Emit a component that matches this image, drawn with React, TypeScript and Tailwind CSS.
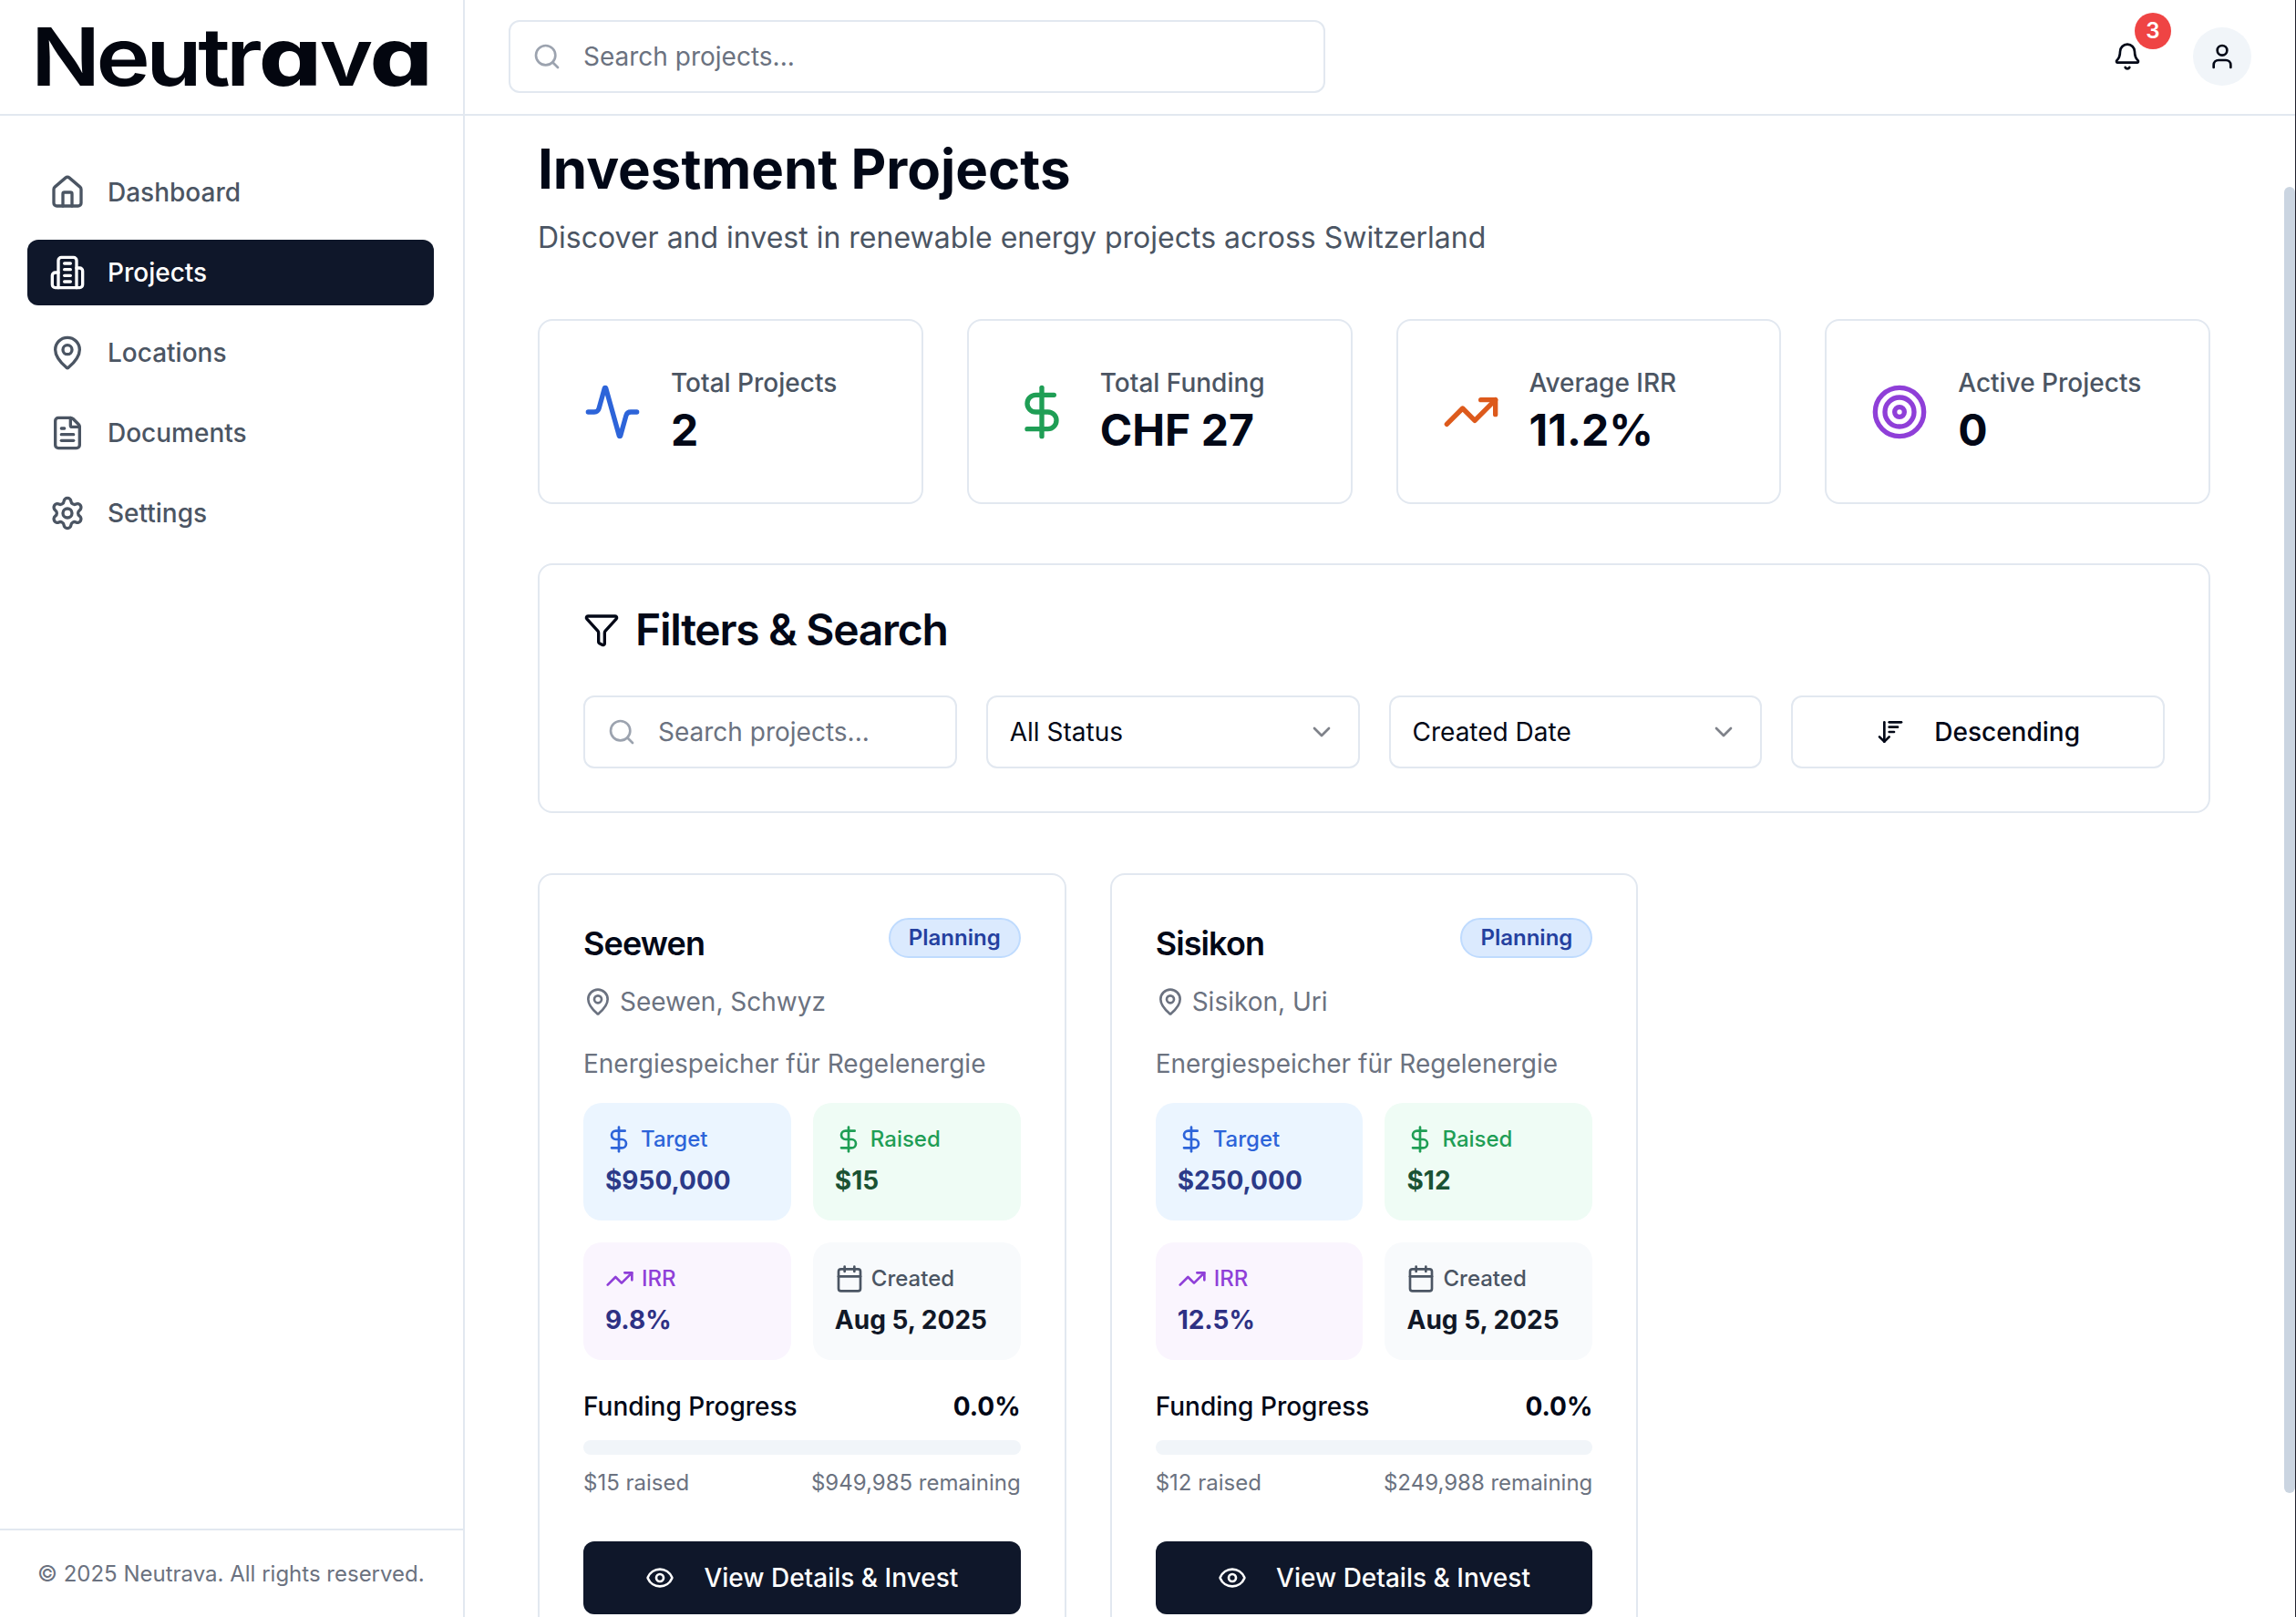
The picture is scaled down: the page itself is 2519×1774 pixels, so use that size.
import {
  Activity,
  ArrowDownWideNarrow,
  Bell,
  Calendar,
  ChevronDown,
  DollarSign,
  Eye,
  FileText,
  Filter,
  House,
  MapPin,
  Search,
  Settings,
  Target,
  TrendingUp,
  User,
} from "lucide-react";
import type { ReactNode } from "react";

function ProjectsIcon({ size }: { size: number }) {
  return (
    <svg
      width={size}
      height={size}
      viewBox="0 0 24 24"
      fill="none"
      stroke="currentColor"
      strokeWidth="2"
      strokeLinecap="round"
      strokeLinejoin="round"
    >
      <path d="M6 22V4a2 2 0 0 1 2-2h8a2 2 0 0 1 2 2v18Z" />
      <path d="M6 12H4a2 2 0 0 0-2 2v6a2 2 0 0 0 2 2h2" />
      <path d="M18 9h2a2 2 0 0 1 2 2v9a2 2 0 0 1-2 2h-2" />
      <path d="M10 6h4" />
      <path d="M10 10h4" />
      <path d="M10 14h4" />
      <path d="M10 18h4" />
    </svg>
  );
}

const nav = [
  { label: "Dashboard", icon: House },
  { label: "Projects", icon: ProjectsIcon, active: true },
  { label: "Locations", icon: MapPin },
  { label: "Documents", icon: FileText },
  { label: "Settings", icon: Settings },
];

const stats = [
  { label: "Total Projects", value: "2", icon: Activity, color: "text-[#2d64d9]" },
  { label: "Total Funding", value: "CHF 27", icon: DollarSign, color: "text-[#1f9e55]" },
  { label: "Average IRR", value: "11.2%", icon: TrendingUp, color: "text-[#dd5a1c]" },
  { label: "Active Projects", value: "0", icon: Target, color: "text-[#8f3fd8]" },
];

const projects = [
  {
    name: "Seewen",
    place: "Seewen, Schwyz",
    target: "$950,000",
    raised: "$15",
    irr: "9.8%",
    remaining: "$949,985 remaining",
  },
  {
    name: "Sisikon",
    place: "Sisikon, Uri",
    target: "$250,000",
    raised: "$12",
    irr: "12.5%",
    remaining: "$249,988 remaining",
  },
];

function Tile({
  icon,
  label,
  value,
  bg,
  labelColor,
  valueColor,
}: {
  icon: ReactNode;
  label: string;
  value: string;
  bg: string;
  labelColor: string;
  valueColor: string;
}) {
  return (
    <div className={`h-[129px] rounded-[20px] px-[24px] pt-[24px] ${bg}`}>
      <div className={`flex h-[32px] items-center gap-[8px] text-[24px] font-medium leading-[32px] ${labelColor}`}>
        {icon}
        <span>{label}</span>
      </div>
      <div className={`mt-[9px] text-[28px] font-bold leading-[40px] ${valueColor}`}>{value}</div>
    </div>
  );
}

function ProjectCard({ project }: { project: (typeof projects)[number] }) {
  return (
    <div className="rounded-[16px] border-2 border-[#e2e8f0] bg-white px-[48px] pt-[47px] pb-[48px]">
      <div className="flex items-start justify-between">
        <h3 className="text-[36px] font-semibold leading-[56px] tracking-[-0.9px] text-[#020817]">{project.name}</h3>
        <span className="flex h-[44px] items-center rounded-full border-2 border-[#bfdbfe] bg-[#dbeafe] px-[20px] text-[24px] font-semibold text-[#24409f]">
          Planning
        </span>
      </div>
      <div className="mt-[16px] flex h-[40px] items-center gap-[8px] text-[28px] leading-[40px] text-[#6b7280]">
        <MapPin size={32} />
        <span>{project.place}</span>
      </div>
      <p className="mt-[28px] text-[28px] leading-[40px] text-[#6b7280]">Energiespeicher für Regelenergie</p>
      <div className="mt-[23px] grid grid-cols-2 gap-[24px]">
        <Tile
          icon={<DollarSign size={32} className="ml-[-1px]" />}
          label="Target"
          value={project.target}
          bg="bg-[#ebf5ff]"
          labelColor="text-[#2d64d9]"
          valueColor="text-[#2b3a88]"
        />
        <Tile
          icon={<DollarSign size={32} className="ml-[-1px]" />}
          label="Raised"
          value={project.raised}
          bg="bg-[#effcf5]"
          labelColor="text-[#1f9e55]"
          valueColor="text-[#1a5233]"
        />
        <Tile
          icon={<TrendingUp size={32} />}
          label="IRR"
          value={project.irr}
          bg="bg-[#faf5fe]"
          labelColor="text-[#8f3fd8]"
          valueColor="text-[#2e3184]"
        />
        <Tile
          icon={<Calendar size={32} />}
          label="Created"
          value="Aug 5, 2025"
          bg="bg-[#f8fafc]"
          labelColor="text-[#4b5563]"
          valueColor="text-[#111827]"
        />
      </div>
      <div className="mt-[31px] flex h-[40px] items-center justify-between text-[28px] leading-[40px] text-[#020817]">
        <span className="font-medium">Funding Progress</span>
        <span className="font-bold">0.0%</span>
      </div>
      <div className="mt-[17px] h-[16px] rounded-full bg-[#f1f5f9]" />
      <div className="mt-[15px] flex h-[32px] items-center justify-between text-[24px] leading-[32px] text-[#6b7280]">
        <span>{project.raised} raised</span>
        <span>{project.remaining}</span>
      </div>
      <button className="mt-[48px] flex h-[80px] w-full items-center justify-center gap-[32px] rounded-[12px] bg-[#0f172a] text-[28px] font-medium text-white">
        <Eye size={32} />
        View Details &amp; Invest
      </button>
    </div>
  );
}

export default function App() {
  return (
    <div className="relative flex h-screen overflow-hidden bg-white font-['Inter',sans-serif] text-[#020817]">
      <aside className="flex w-[510px] shrink-0 flex-col border-r-2 border-[#e2e8f0]">
        <div className="flex h-[127px] shrink-0 items-center overflow-hidden border-b-2 border-[#e2e8f0] pl-[34px]">
          <span
            aria-label="Neutrava"
            className="origin-left scale-x-[1.14] text-[88px] leading-none font-semibold tracking-[-4px] text-[#03060f]"
          >
            Neutr<span className="font-['DejaVu_Sans',sans-serif] font-bold">ɑ</span>v
            <span className="font-['DejaVu_Sans',sans-serif] font-bold">ɑ</span>
          </span>
        </div>
        <nav className="flex flex-1 flex-col gap-[16px] pt-[48px] pr-[32px] pl-[30px]">
          {nav.map((item) => (
            <a
              key={item.label}
              className={`flex h-[72px] items-center gap-[24px] rounded-[12px] px-[24px] text-[28px] font-medium ${
                item.active ? "bg-[#0f172a] text-white" : "text-[#4b5563]"
              }`}
            >
              <item.icon size={40} />
              {item.label}
            </a>
          ))}
        </nav>
        <div className="flex h-[97px] items-center border-t-2 border-[#e2e8f0] pl-[41px] text-[24px] text-[#6b7280]">
          © 2025 Neutrava. All rights reserved.
        </div>
      </aside>

      <div className="flex min-w-0 flex-1 flex-col">
        <header className="flex h-[127px] shrink-0 items-center justify-between border-b-2 border-[#e2e8f0] pr-[49px] pb-[2px] pl-[48px]">
          <div className="flex h-[80px] w-[896px] items-center rounded-[12px] border-2 border-[#e2e8f0] pl-[24px] text-[28px] text-[#6b7280]">
            <Search size={32} className="text-[#9ca3af]" />
            <span className="ml-[24px]">Search projects...</span>
          </div>
          <div className="flex items-center gap-[32px]">
            <button className="relative flex h-[80px] w-[80px] items-center justify-center text-[#020817]">
              <Bell size={32} />
              <span className="absolute top-[-8px] right-[-8px] flex h-[40px] w-[40px] items-center justify-center rounded-full bg-[#ef4444] text-[24px] font-semibold text-white">
                3
              </span>
            </button>
            <div className="flex h-[64px] w-[64px] items-center justify-center rounded-full bg-[#f1f5f9]">
              <User size={32} />
            </div>
          </div>
        </header>

        <main className="min-h-0 flex-1 overflow-hidden pt-[22px] pr-[94px] pl-[80px]">
          <h1 className="text-[60px] leading-[72px] font-bold">Investment Projects</h1>
          <p className="mt-[16px] text-[32px] leading-[48px] text-[#4b5563]">
            Discover and invest in renewable energy projects across Switzerland
          </p>

          <div className="mt-[65px] grid grid-cols-4 gap-[48px]">
            {stats.map((stat) => (
              <div
                key={stat.label}
                className="flex h-[203px] items-center gap-[32px] rounded-[16px] border-2 border-[#e2e8f0] bg-white px-[48px]"
              >
                <stat.icon size={64} className={stat.color} />
                <div>
                  <div className="text-[28px] leading-[40px] font-medium text-[#4b5563]">{stat.label}</div>
                  <div className="text-[48px] leading-[64px] font-bold text-[#020817]">{stat.value}</div>
                </div>
              </div>
            ))}
          </div>

          <section className="mt-[65px] h-[274px] rounded-[16px] border-2 border-[#e2e8f0] bg-white px-[48px] pt-[43px]">
            <div className="flex h-[56px] items-center gap-[17px]">
              <Filter size={40} />
              <h2 className="text-[48px] leading-[56px] font-semibold tracking-[-1.3px]">Filters &amp; Search</h2>
            </div>
            <div className="mt-[44px] grid grid-cols-4 gap-[32px] text-[28px]">
              <div className="flex h-[80px] items-center rounded-[12px] border-2 border-[#e2e8f0] pl-[24px] text-[#6b7280]">
                <Search size={32} className="text-[#9ca3af]" />
                <span className="ml-[24px]">Search projects...</span>
              </div>
              <div className="flex h-[80px] items-center justify-between rounded-[12px] border-2 border-[#e2e8f0] pr-[24px] pl-[24px]">
                All Status
                <ChevronDown size={32} className="opacity-50" />
              </div>
              <div className="flex h-[80px] items-center justify-between rounded-[12px] border-2 border-[#e2e8f0] pr-[24px] pl-[24px]">
                Created Date
                <ChevronDown size={32} className="opacity-50" />
              </div>
              <button className="flex h-[80px] items-center justify-center gap-[32px] rounded-[12px] border-2 border-[#e2e8f0] font-medium">
                <ArrowDownWideNarrow size={32} />
                Descending
              </button>
            </div>
          </section>

          <div className="mt-[66px] grid grid-cols-3 gap-[48px]">
            {projects.map((project) => (
              <ProjectCard key={project.name} project={project} />
            ))}
          </div>
        </main>
      </div>

      <div className="absolute top-[205px] right-[1px] h-[1433px] w-[12px] rounded-full bg-[#cbd5e1]" />
      <div className="absolute top-0 right-0 bottom-0 w-[1px] bg-[#22222e]" />
    </div>
  );
}
